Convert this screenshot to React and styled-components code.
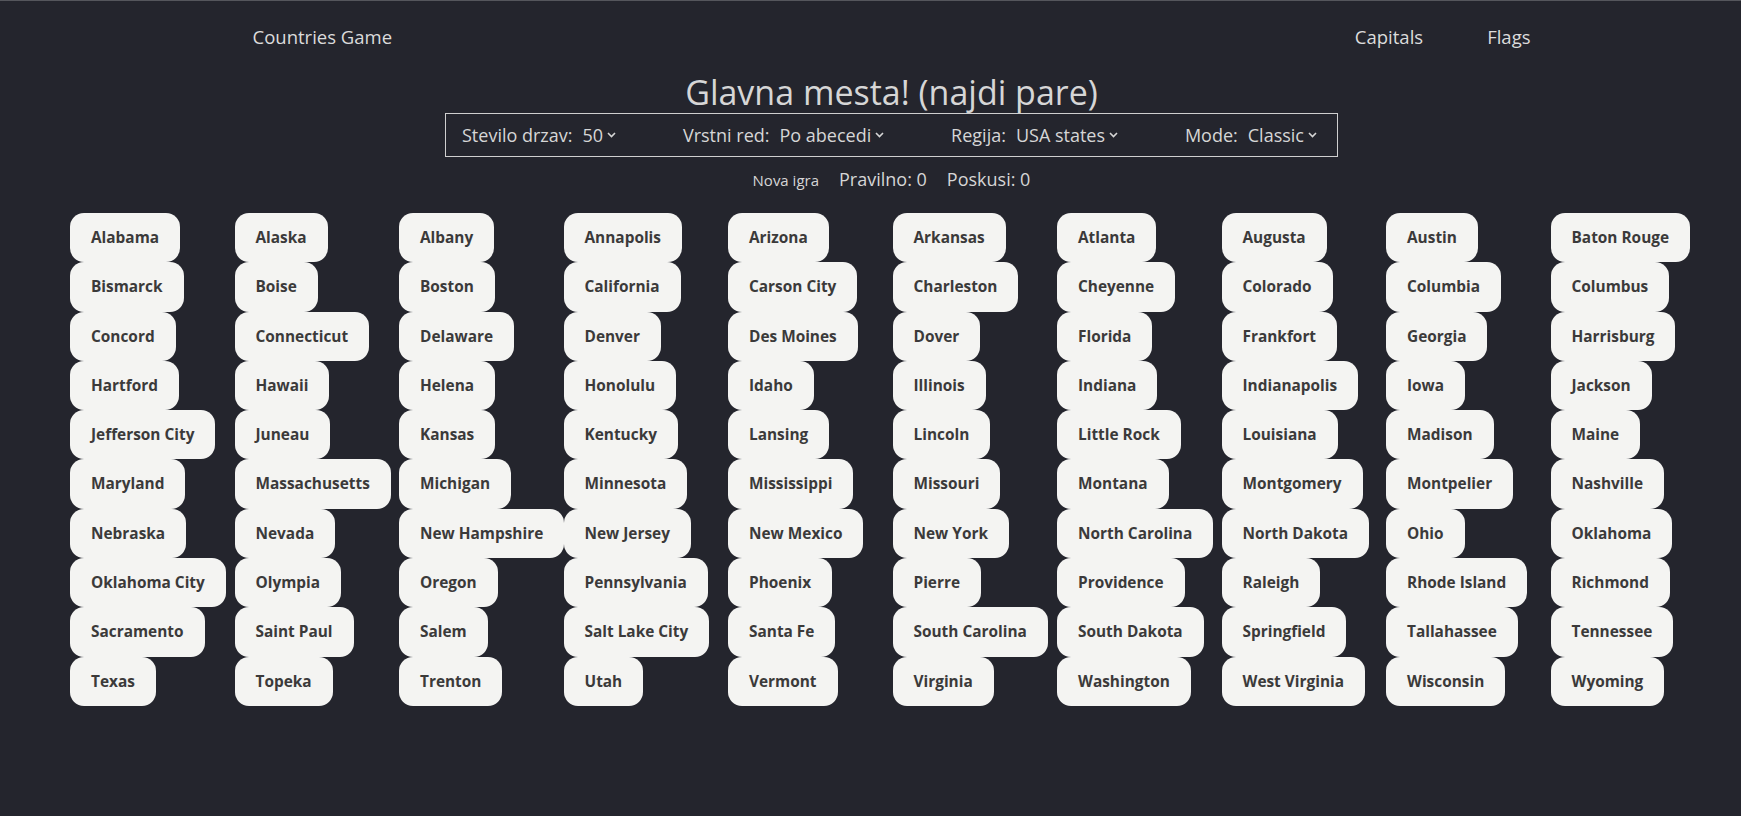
import styled, { createGlobalStyle } from "styled-components"

const GlobalStyle = createGlobalStyle`
    body {
        margin: 0;
        background-color: #24252d;
        font-family: "Open Sans", "Noto Sans", sans-serif;
        color: #d6d6d6;
    }
`

const capitals = [
    "Alabama", "Alaska", "Albany", "Annapolis", "Arizona", "Arkansas", "Atlanta", "Augusta", "Austin", "Baton Rouge",
    "Bismarck", "Boise", "Boston", "California", "Carson City", "Charleston", "Cheyenne", "Colorado", "Columbia", "Columbus",
    "Concord", "Connecticut", "Delaware", "Denver", "Des Moines", "Dover", "Florida", "Frankfort", "Georgia", "Harrisburg",
    "Hartford", "Hawaii", "Helena", "Honolulu", "Idaho", "Illinois", "Indiana", "Indianapolis", "Iowa", "Jackson",
    "Jefferson City", "Juneau", "Kansas", "Kentucky", "Lansing", "Lincoln", "Little Rock", "Louisiana", "Madison", "Maine",
    "Maryland", "Massachusetts", "Michigan", "Minnesota", "Mississippi", "Missouri", "Montana", "Montgomery", "Montpelier", "Nashville",
    "Nebraska", "Nevada", "New Hampshire", "New Jersey", "New Mexico", "New York", "North Carolina", "North Dakota", "Ohio", "Oklahoma",
    "Oklahoma City", "Olympia", "Oregon", "Pennsylvania", "Phoenix", "Pierre", "Providence", "Raleigh", "Rhode Island", "Richmond",
    "Sacramento", "Saint Paul", "Salem", "Salt Lake City", "Santa Fe", "South Carolina", "South Dakota", "Springfield", "Tallahassee", "Tennessee",
    "Texas", "Topeka", "Trenton", "Utah", "Vermont", "Virginia", "Washington", "West Virginia", "Wisconsin", "Wyoming",
]

const selects = [
    { label: "Stevilo drzav:", value: "50" },
    { label: "Vrstni red:", value: "Po abecedi" },
    { label: "Regija:", value: "USA states" },
    { label: "Mode:", value: "Classic" },
]

const Chevron = () => (
    <svg width="9" height="6" viewBox="0 0 9 6" fill="none">
        <path d="M1 1l3.5 3.5L8 1" stroke="#d6d6d6" strokeWidth="1.6" />
    </svg>
)

const App = () => {
    return (
        <>
            <GlobalStyle />
            <Page>
                <Navbar>
                    <Brand>Countries Game</Brand>
                    <NavLinks>
                        <NavLink>Capitals</NavLink>
                        <NavLink>Flags</NavLink>
                    </NavLinks>
                </Navbar>

                <Controls>
                    <Title>Glavna mesta! (najdi pare)</Title>

                    <Settings>
                        {selects.map((s) => (
                            <SelectGroup key={s.label}>
                                <span>{s.label}</span>
                                <SelectValue>
                                    {s.value}
                                    <Chevron />
                                </SelectValue>
                            </SelectGroup>
                        ))}
                    </Settings>

                    <Stats>
                        <NewGame>Nova igra</NewGame>
                        <span>Pravilno: 0</span>
                        <span>Poskusi: 0</span>
                    </Stats>
                </Controls>

                <Board>
                    {capitals.map((name) => (
                        <Tile key={name}>{name}</Tile>
                    ))}
                </Board>
            </Page>
        </>
    )
}

const Page = styled.div`
    min-height: 816px;
    box-sizing: border-box;
    border-top: 1px solid #55565c;
`

const Navbar = styled.nav`
    width: 1320px;
    margin: 0 auto;
    height: 70px;
    display: flex;
    align-items: center;
    justify-content: space-between;
    padding-left: 42px;
    box-sizing: border-box;
    font-size: 18.5px;
`

const Brand = styled.div`
    color: #dcdcdc;
`

const NavLinks = styled.div`
    display: flex;
    gap: 64px;
`

const NavLink = styled.div`
    color: #dcdcdc;
    cursor: pointer;
`

const Controls = styled.section`
    padding-left: 42px;
`

const Title = styled.h1`
    margin: 0;
    text-align: center;
    font-weight: 400;
    font-size: 34px;
    line-height: 42px;
    color: #d6d6d6;
`

const Settings = styled.div`
    width: 893px;
    height: 44px;
    box-sizing: border-box;
    margin: 0 auto;
    border: 1px solid #cfcfcf;
    display: flex;
    align-items: center;
    justify-content: space-between;
    padding: 0 20px 0 16px;
    font-size: 18px;
`

const SelectGroup = styled.div`
    display: flex;
    align-items: center;
    gap: 10px;
`

const SelectValue = styled.span`
    display: flex;
    align-items: center;
    gap: 4px;
`

const Stats = styled.div`
    display: flex;
    justify-content: center;
    align-items: baseline;
    gap: 20px;
    height: 46px;
    padding-top: 10px;
    box-sizing: border-box;
    font-size: 18px;
`

const NewGame = styled.span`
    font-size: 15px;
    cursor: pointer;
`

const Board = styled.div`
    display: grid;
    grid-template-columns: repeat(10, 164.5px);
    justify-items: start;
    padding-left: 70px;
    margin-top: 10px;
`

const Tile = styled.button`
    font-family: inherit;
    font-weight: 700;
    font-size: 15.4px;
    line-height: 19.3px;
    color: #3b3a3a;
    background-color: #f4f4f2;
    border: none;
    border-radius: 14px;
    padding: 15px 21px;
    white-space: nowrap;
    cursor: pointer;
`

export default App
